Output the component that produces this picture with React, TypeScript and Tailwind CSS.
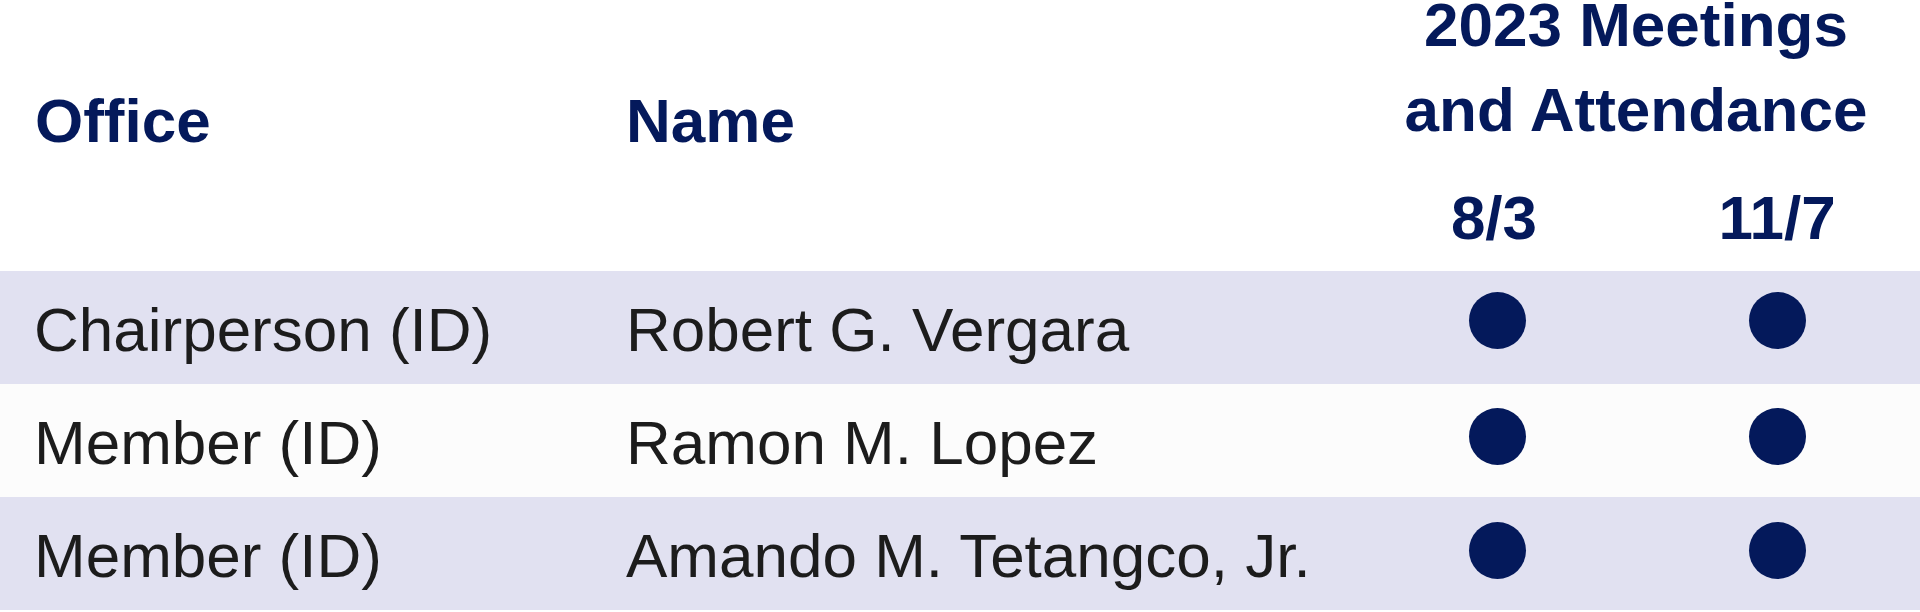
const rows = [
  { office: "Chairperson (ID)", name: "Robert G. Vergara", bg: "bg-[#e1e1f1]", dot: "mt-[21px]" },
  { office: "Member (ID)", name: "Ramon M. Lopez", bg: "bg-[#fcfcfc]", dot: "mt-[24px]" },
  { office: "Member (ID)", name: "Amando M. Tetangco, Jr.", bg: "bg-[#e1e1f1]", dot: "mt-[25px]" },
];

const cols = "grid grid-cols-[626px_734px_274px_286px]";

function Dot({ offset }: { offset: string }) {
  return (
    <div className="flex justify-center">
      <div className={`h-[57px] w-[57px] rounded-full bg-[#04195b] ${offset}`} />
    </div>
  );
}

export default function App() {
  return (
    <div
      className="h-[612px] w-[1920px] overflow-hidden bg-white text-[62px] leading-[50px]"
      style={{ fontFamily: '"Liberation Sans", Arial, sans-serif' }}
    >
      {/* Header */}
      <div className={`${cols} h-[271px] font-bold text-[#04195b]`}>
        <div className="pl-[35px] pt-[96px]">Office</div>
        <div className="pt-[96px]">Name</div>
        <div className="col-span-2 flex flex-col">
          <div className="pr-[8px] text-center">
            <div>2023 Meetings</div>
            <div className="mt-[35px]">and Attendance</div>
          </div>
          <div className="mt-[58px] grid grid-cols-[274px_286px]">
            <div className="pr-[6px] text-center">8/3</div>
            <div className="text-center">11/7</div>
          </div>
        </div>
      </div>

      {/* Members */}
      {rows.map((r, i) => (
        <div key={i} className={`${cols} h-[113px] text-[#1c1c1c] ${r.bg}`}>
          <div className="pl-[34px] pt-[34px]">{r.office}</div>
          <div className="pt-[34px]">{r.name}</div>
          <Dot offset={r.dot} />
          <Dot offset={r.dot} />
        </div>
      ))}
    </div>
  );
}
